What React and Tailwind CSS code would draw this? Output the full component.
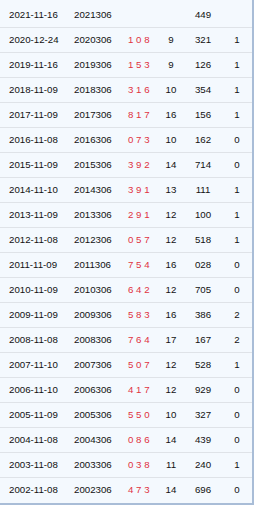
import React from "react";

const rows = [
  ["2021-11-16", "2021306", "", "", "449", ""],
  ["2020-12-24", "2020306", "108", "9", "321", "1"],
  ["2019-11-16", "2019306", "153", "9", "126", "1"],
  ["2018-11-09", "2018306", "316", "10", "354", "1"],
  ["2017-11-09", "2017306", "817", "16", "156", "1"],
  ["2016-11-08", "2016306", "073", "10", "162", "0"],
  ["2015-11-09", "2015306", "392", "14", "714", "0"],
  ["2014-11-10", "2014306", "391", "13", "111", "1"],
  ["2013-11-09", "2013306", "291", "12", "100", "1"],
  ["2012-11-08", "2012306", "057", "12", "518", "1"],
  ["2011-11-09", "2011306", "754", "16", "028", "0"],
  ["2010-11-09", "2010306", "642", "12", "705", "0"],
  ["2009-11-09", "2009306", "583", "16", "386", "2"],
  ["2008-11-08", "2008306", "764", "17", "167", "2"],
  ["2007-11-10", "2007306", "507", "12", "528", "1"],
  ["2006-11-10", "2006306", "417", "12", "929", "0"],
  ["2005-11-09", "2005306", "550", "10", "327", "0"],
  ["2004-11-08", "2004306", "086", "14", "439", "0"],
  ["2003-11-08", "2003306", "038", "11", "240", "1"],
  ["2002-11-08", "2002306", "473", "14", "696", "0"],
];

export default function App() {
  return (
    <div className="w-[256px] h-[507px] bg-white">
      <div
        className="w-[254px] bg-[#f4f9fe] pt-[3px] border-r-2 border-b-2 border-[#a9bdd7] text-[9.7px] text-[#111]"
        style={{ fontFamily: '"Liberation Sans", Arial, sans-serif' }}
      >
        {rows.map(([date, issue, nums, sum, code, odd], i) => (
          <div
            key={date}
            className={`flex items-center h-[25px] ${
              i < rows.length - 1 ? "border-b border-[#dfe3e8]" : ""
            }`}
          >
            <span className="w-[74px] pl-[9px]">{date}</span>
            <span className="w-[54px]">{issue}</span>
            <span className="w-[30px] text-[#e0333f]">
              {nums.split("").join(" ")}
            </span>
            <span className="w-[26px] text-center">{sum}</span>
            <span className="w-[38px] text-center">{code}</span>
            <span className="w-[30px] text-center">{odd}</span>
          </div>
        ))}
      </div>
    </div>
  );
}
